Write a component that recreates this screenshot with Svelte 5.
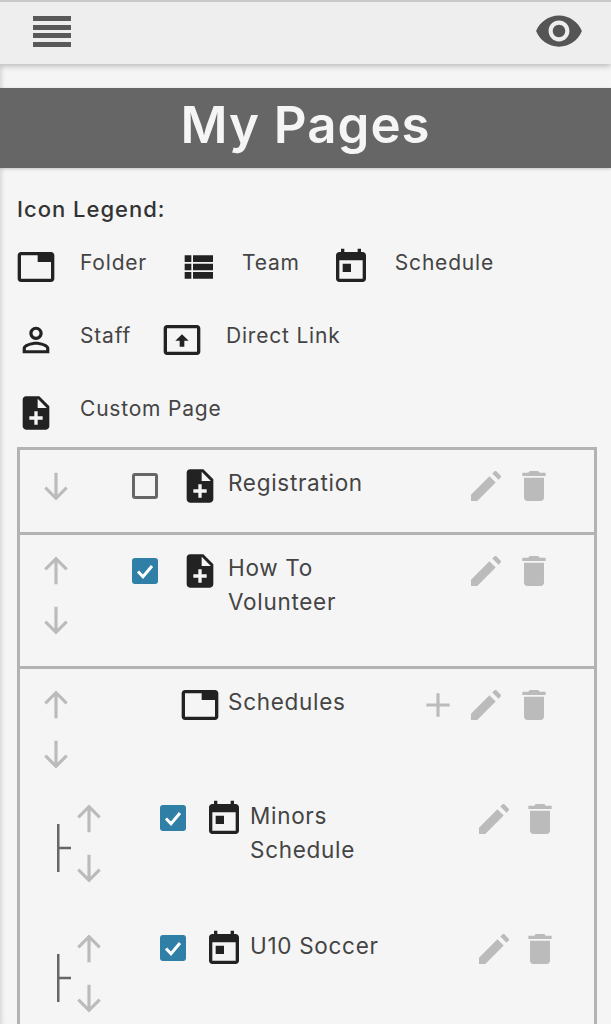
<script>
  const P = {
    note: "M14 2H6c-1.1 0-1.99.9-1.99 2L4 20c0 1.1.89 2 1.99 2H18c1.1 0 2-.9 2-2V8l-6-6zm2 14h-3v3h-2v-3H8v-2h3v-3h2v3h3v2zm-3-7V3.5L18.5 9H13z",
    cal: "M7 10h5v5H7v-5zM16 1v2H8V1H6v2H5c-1.11 0-1.99.9-1.99 2L3 19c0 1.1.89 2 2 2h14c1.1 0 2-.9 2-2V5c0-1.1-.9-2-2-2h-1V1h-2zm3 18H5V8h14v11z",
    tab: "M21 3H3c-1.1 0-2 .9-2 2v14c0 1.1.9 2 2 2h18c1.1 0 2-.9 2-2V5c0-1.1-.9-2-2-2zm0 16H3V5h10v4h8v10z",
    team: "M4 14h4v-4H4v4zm0 5h4v-4H4v4zM4 9h4V5H4v4zm5 5h12v-4H9v4zm0 5h12v-4H9v4zM9 5v4h12V5H9z",
    staff: "M12 5.9c1.16 0 2.1.94 2.1 2.1s-.94 2.1-2.1 2.1S9.9 9.16 9.9 8s.94-2.1 2.1-2.1m0 9c2.97 0 6.1 1.46 6.1 2.1v1.1H5.9V17c0-.64 3.13-2.1 6.1-2.1M12 4C9.79 4 8 5.79 8 8s1.79 4 4 4 4-1.79 4-4-1.79-4-4-4zm0 9c-2.67 0-8 1.34-8 4v3h16v-3c0-2.66-5.33-4-8-4z",
    link: "M21 3H3c-1.1 0-2 .9-2 2v14c0 1.1.9 2 2 2h18c1.1 0 2-.9 2-2V5c0-1.1-.9-2-2-2zm0 16H3V5h18v14zM12 8.5l-4 4h2.6v3.5h2.8v-3.5H16l-4-4z",
    eye: "M12 4.5C7 4.5 2.73 7.61 1 12c1.73 4.39 6 7.5 11 7.5s9.27-3.11 11-7.5c-1.73-4.39-6-7.5-11-7.5zM12 17c-2.76 0-5-2.24-5-5s2.24-5 5-5 5 2.24 5 5-2.24 5-5 5zm0-8c-1.66 0-3 1.34-3 3s1.34 3 3 3 3-1.34 3-3-1.34-3-3-3z",
    edit: "M3 17.25V21h3.75L17.81 9.94l-3.75-3.75L3 17.25zM20.71 7.04c.39-.39.39-1.02 0-1.41l-2.34-2.34c-.39-.39-1.02-.39-1.41 0l-1.2 1.2 3.75 3.75 1.2-1.2z",
    trash: "M6 19c0 1.1.9 2 2 2h8c1.1 0 2-.9 2-2V7H6v12zM19 4h-3.5l-1-1h-5l-1 1H5v2h14V4z",
    up: "M12 20V5M5.6 11L12 4.6l6.4 6.4",
    down: "M12 4v15M5.6 13l6.4 6.4 6.4-6.4",
    plus: "M12 5v14M5 12h14"
  };
  const legend = [
    ["tab", "Folder"], ["team", "Team"], ["cal", "Schedule"],
    ["staff", "Staff"], ["link", "Direct Link"], ["note", "Custom Page"]
  ];
</script>

{#snippet icon(name, cls = "")}
  <svg class="ic {cls}" viewBox="0 0 24 24" aria-hidden="true"><path d={P[name]} /></svg>
{/snippet}

{#snippet line(name)}
  <svg class="ic ln" viewBox="0 0 24 24" aria-hidden="true"><path d={P[name]} /></svg>
{/snippet}

{#snippet check(on)}
  {#if on}
    <span class="check on">
      <svg viewBox="0 0 26 26" aria-hidden="true"><path d="M6 13.5l5 5.2L20 8" /></svg>
    </span>
  {:else}
    <span class="check"></span>
  {/if}
{/snippet}

{#snippet actions(plus)}
  <div class="actions">
    {#if plus}{@render line("plus")}{/if}
    {@render icon("edit", "grey")}
    {@render icon("trash", "grey")}
  </div>
{/snippet}

{#snippet child(ic, label)}
  <div class="child">
    <svg class="tee" viewBox="0 0 14 48" aria-hidden="true"><path d="M1.25 0v48M1 24h14" /></svg>
    <div class="arrows">{@render line("up")}{@render line("down")}</div>
    {@render check(true)}
    <div class="iconcol">{@render icon(ic)}</div>
    <div class="label narrow">{label}</div>
    {@render actions(false)}
  </div>
{/snippet}

<div class="page">
  <header class="topbar">
    <div class="burger"><span></span><span></span><span></span><span></span></div>
    <svg class="eye" viewBox="0 0 24 24" aria-hidden="true"><path d={P.eye} /></svg>
  </header>

  <h1 class="title">My Pages</h1>

  <section class="legend">
    <h2>Icon Legend:</h2>
    <div class="items">
      {#each legend as [ic, text]}
        <div class="item">{@render icon(ic)}<span>{text}</span></div>
      {/each}
    </div>
  </section>

  <div class="list">
    <div class="row">
      <div class="arrows">{@render line("down")}</div>
      {@render check(false)}
      <div class="iconcol">{@render icon("note")}</div>
      <div class="label">Registration</div>
      {@render actions(false)}
    </div>
    <div class="row">
      <div class="arrows">{@render line("up")}{@render line("down")}</div>
      {@render check(true)}
      <div class="iconcol">{@render icon("note")}</div>
      <div class="label">How To Volunteer</div>
      {@render actions(false)}
    </div>
    <div class="group">
      <div class="row head">
        <div class="arrows">{@render line("up")}{@render line("down")}</div>
        <div class="check blank"></div>
        <div class="iconcol">{@render icon("tab")}</div>
        <div class="label">Schedules</div>
        {@render actions(true)}
      </div>
      {@render child("cal", "Minors Schedule")}
      {@render child("cal", "U10 Soccer")}
    </div>
  </div>
</div>

<style>
  :global(body) {
    margin: 0;
    background: #f5f5f5;
  }
  .page {
    height: 1024px;
    overflow: hidden;
    background: #f5f5f5;
    color: #333;
    font-family: "Inter", "Liberation Sans", sans-serif;
    box-shadow: inset 5px 0 4px -3px rgba(0, 0, 0, 0.12);
  }
  .topbar {
    box-sizing: border-box;
    height: 64px;
    border-top: 2px solid #c9c9c9;
    background: #eeeeee;
    box-shadow: 0 2px 6px rgba(0, 0, 0, 0.25);
    display: flex;
    justify-content: space-between;
    align-items: flex-start;
    padding: 14px 29px 0 33px;
  }
  .burger {
    display: flex;
    flex-direction: column;
    gap: 3.5px;
    width: 38px;
  }
  .burger span {
    display: block;
    height: 5px;
    background: #595959;
  }
  .eye {
    width: 50px;
    height: 50px;
    margin-top: -10px;
    margin-right: -2px;
    fill: #555;
  }
  .title {
    margin: 24px 0 0;
    height: 80px;
    line-height: 73px;
    background: #666667;
    box-shadow: 0 1px 3px rgba(0, 0, 0, 0.2);
    color: #f5f5f5;
    text-align: center;
    font-size: 51px;
    font-weight: 600;
    letter-spacing: 1px;
  }
  .legend {
    padding: 25px 0 0 16px;
  }
  .legend h2 {
    margin: 0 0 19px 1px;
    font-size: 22px;
    line-height: 32px;
    font-weight: 500;
    letter-spacing: 1px;
    color: #333;
  }
  .items {
    display: flex;
    flex-wrap: wrap;
    column-gap: 31px;
    row-gap: 30px;
    max-width: 520px;
  }
  .item {
    display: flex;
    align-items: flex-start;
    gap: 24px;
    height: 43px;
    font-size: 21px;
    line-height: 34px;
    letter-spacing: 0.8px;
    color: #444;
  }
  .item span {
    padding-top: 2px;
  }
  .item .ic {
    margin-top: 3px;
  }
  .ic {
    flex: none;
    display: block;
    width: 40px;
    height: 40px;
    fill: #222;
  }
  .ic.grey {
    fill: #bbb;
  }
  .ic.ln {
    fill: none;
    stroke: #bbb;
    stroke-width: 1.9;
  }
  .list {
    margin: 14px 14px 0 17px;
    border: 3px solid #b3b3b3;
    border-bottom: 0;
  }
  .row {
    display: flex;
    align-items: flex-start;
    padding: 16px 40px 26px 16px;
    border-bottom: 3px solid #b3b3b3;
  }
  .group {
    padding-bottom: 40px;
  }
  .row.head {
    border-bottom: 0;
    padding-bottom: 25px;
  }
  .arrows {
    flex: none;
    width: 40px;
    display: flex;
    flex-direction: column;
    gap: 9px;
  }
  .check {
    flex: none;
    box-sizing: border-box;
    width: 26px;
    height: 26px;
    margin: 7px 0 0 56px;
    border: 3px solid #666;
    border-radius: 3px;
  }
  .check.blank {
    border: 0;
  }
  .check.on {
    border: 0;
    background: #2f7fa6;
  }
  .check svg {
    display: block;
    width: 26px;
    height: 26px;
    fill: none;
    stroke: #fff;
    stroke-width: 3;
  }
  .iconcol {
    flex: none;
    margin-left: 22px;
  }
  .label {
    flex: 1;
    min-width: 0;
    max-width: 170px;
    margin-left: 8px;
    font-size: 22.5px;
    line-height: 34px;
    letter-spacing: 0.7px;
    color: #444;
  }
  .narrow {
    margin-left: 6px;
    max-width: 150px;
  }
  .actions {
    flex: none;
    margin-left: auto;
    display: flex;
    gap: 8px;
  }
  .child {
    display: flex;
    align-items: flex-start;
    height: 89px;
    margin-bottom: 41px;
    padding: 0 34px 0 37px;
  }
  .tee {
    flex: none;
    width: 14px;
    height: 48px;
    margin-top: 25px;
    fill: none;
    stroke: #666;
    stroke-width: 2.5;
  }
  .child .arrows {
    margin-left: -2px;
  }
  .child .check {
    margin: 6px 0 0 51px;
  }
  .child .iconcol {
    margin-left: 18px;
  }
  .child .actions {
    gap: 6px;
  }
</style>
